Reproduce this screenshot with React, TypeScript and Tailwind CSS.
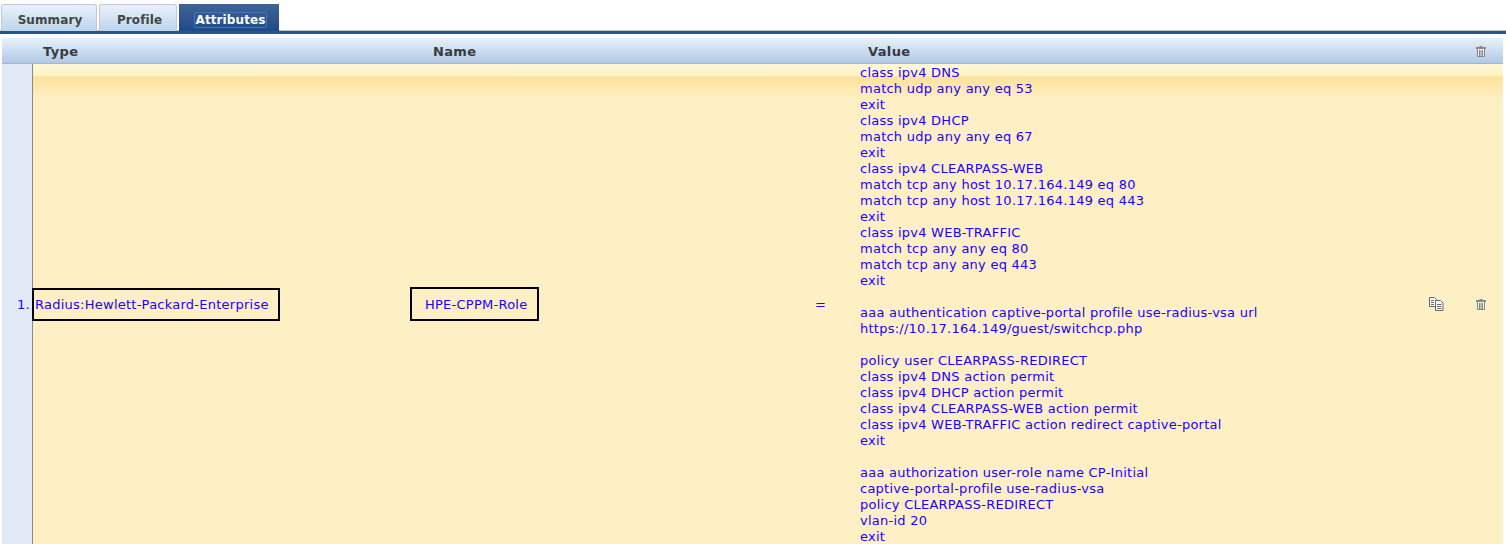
const valueLines = [
  "class ipv4 DNS",
  "match udp any any eq 53",
  "exit",
  "class ipv4 DHCP",
  "match udp any any eq 67",
  "exit",
  "class ipv4 CLEARPASS-WEB",
  "match tcp any host 10.17.164.149 eq 80",
  "match tcp any host 10.17.164.149 eq 443",
  "exit",
  "class ipv4 WEB-TRAFFIC",
  "match tcp any any eq 80",
  "match tcp any any eq 443",
  "exit",
  "",
  "aaa authentication captive-portal profile use-radius-vsa url",
  "https://10.17.164.149/guest/switchcp.php",
  "",
  "policy user CLEARPASS-REDIRECT",
  "class ipv4 DNS action permit",
  "class ipv4 DHCP action permit",
  "class ipv4 CLEARPASS-WEB action permit",
  "class ipv4 WEB-TRAFFIC action redirect captive-portal",
  "exit",
  "",
  "aaa authorization user-role name CP-Initial",
  "captive-portal-profile use-radius-vsa",
  "policy CLEARPASS-REDIRECT",
  "vlan-id 20",
  "exit",
];

const TrashIcon = () => (
  <svg width="10" height="11" viewBox="0 0 10 11" fill="none">
    <rect x="3.5" y="0" width="3" height="1" fill="#8a8a8a" />
    <rect x="0" y="1" width="10" height="2" fill="#8a8a8a" />
    <rect x="1" y="3" width="8" height="8" fill="#f4f4f4" />
    <path d="M1.5 3v7.5h7V3M3.5 4v6M5 4v6M6.5 4v6" stroke="#858585" strokeWidth="1" />
  </svg>
);

const CopyIcon = () => (
  <svg width="15" height="14" viewBox="0 0 15 14" fill="none">
    <path d="M0.5 0.5h5l2 2v7h-7z" fill="#ffffff" stroke="#666666" />
    <path d="M2 3.5h3M2 5.5h3M2 7.5h3" stroke="#666666" />
    <path d="M6.5 3.5h5l2.5 2.5v7.5h-7.5z" fill="#ffffff" stroke="#666666" />
    <path d="M8 7.5h4.5M8 9.5h4.5M8 11.5h4.5" stroke="#666666" />
  </svg>
);

const App = () => {
  return (
    <div className="h-[544px] w-[1506px] overflow-hidden bg-white font-['Verdana','DejaVu_Sans',sans-serif] text-[13px] leading-4 tracking-[0.25px]">
      {/* Tabs */}
      <div className="flex h-[31px] items-end gap-[2px] border-b border-[#c4c4c4] pl-[1px]">
        <div className="-mb-px flex h-[27px] w-[96px] items-center justify-center rounded-t-[3px] border border-b-0 border-[#c3c6e2] bg-gradient-to-b from-[#eaf2fb] to-[#bdd4ec] pl-[2px] pt-[3px] text-[12px] font-bold tracking-[0.1px] text-[#444444]">
          Summary
        </div>
        <div className="-mb-px flex h-[27px] w-[78px] items-center justify-center rounded-t-[3px] border border-b-0 border-[#c3c6e2] bg-gradient-to-b from-[#eaf2fb] to-[#bdd4ec] pl-[3px] pt-[3px] text-[12px] font-bold tracking-[0.1px] text-[#444444]">
          Profile
        </div>
        <div className="-mb-px flex h-[27px] w-[100px] items-center justify-center bg-gradient-to-b from-[#3f6597] to-[#1f4a85] pl-[3px] pt-[4px] text-[12px] font-bold tracking-[0.1px] text-white">
          <span className="rounded-[2px] border border-[#4274c0] px-[1px] leading-[14px]">Attributes</span>
        </div>
      </div>
      <div className="h-[3px] bg-[#25548e]" />

      {/* Table */}
      <div className="ml-[2px] mr-[3px] mt-[4px]">
        <div className="flex h-[26px] items-center border-b border-[#b3b3b3] bg-gradient-to-b from-[#e8f1fb] to-[#afc9e8] pt-[2px] font-bold tracking-[0.35px] text-[#3a3a3a]">
          <div className="w-[431px] pl-[41px]">Type</div>
          <div className="w-[435px]">Name</div>
          <div className="flex-1">Value</div>
          <div className="flex w-[45px] justify-end pr-[17px]">
            <TrashIcon />
          </div>
        </div>

        <div className="flex h-[480px] text-[#1a00ff]">
          <div className="flex w-[31px] items-center justify-end border-r border-[#8a8a8a] bg-[#e3eaf7] pr-[2px] pt-[1px]">
            1.
          </div>
          <div className="flex flex-1 items-center bg-[linear-gradient(to_bottom,#fff8d6_0px,#fff3c4_12px,#fee29b_13px,#fef0c4_36px,#fef0c4_100%)]">
            <div className="w-[377px]">
              <div className="-ml-px mt-[1px] flex h-[33px] w-[248px] items-center border-2 border-black pl-[1px]">
                Radius:Hewlett-Packard-Enterprise
              </div>
            </div>
            <div className="w-[405px]">
              <div className="flex h-[34px] w-[129px] items-center border-2 border-black pl-[13px] pt-[1px]">
                HPE-CPPM-Role
              </div>
            </div>
            <div className="w-[45px] pt-[1px]">=</div>
            <div className="w-[569px] pt-[1px]">
              {valueLines.map((line, index) => (
                <div key={index} className="h-4 whitespace-pre">
                  {line}
                </div>
              ))}
            </div>
            <div className="w-[47px]">
              <CopyIcon />
            </div>
            <TrashIcon />
          </div>
        </div>
      </div>
    </div>
  );
};

export default App;
